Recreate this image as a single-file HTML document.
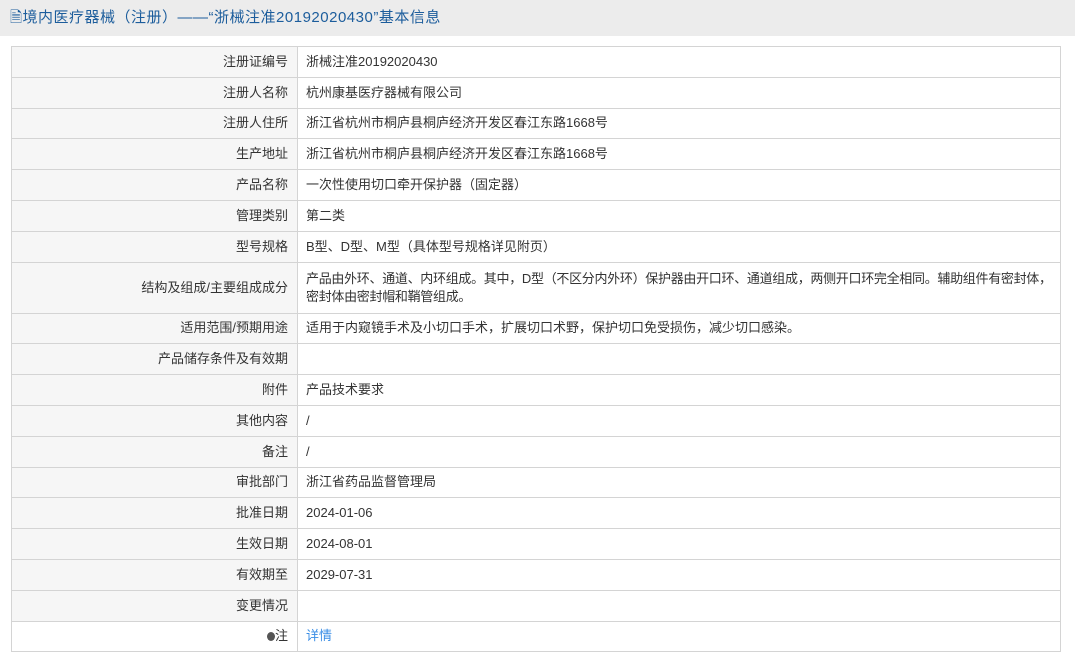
<!DOCTYPE html>
<html><head><meta charset="utf-8"><style>
body{margin:0;background:#fff;font-family:"Liberation Sans","Noto Sans CJK SC",sans-serif;font-size:13px;color:#333;width:1075px;height:663px;overflow:hidden}
.hd{height:36px;background:#ececec;color:#1c5d9c;font-size:15px;letter-spacing:0.5px;line-height:36px;padding-left:10px}
table{position:absolute;left:11px;top:46px;width:1050px;border-collapse:collapse;border:1px solid #ccc;table-layout:fixed}
td{border:1px solid #d4d4d4;height:29.8px;padding:0 8px;line-height:18px;overflow:hidden}
td.l{width:268px;text-align:right;background:#f6f6f6;padding-right:9px}
a{color:#3a8ee6;text-decoration:none}
</style></head><body>
<div class="hd">&#128462;境内医疗器械（注册）——“浙械注准20192020430”基本信息</div>
<table>
<tr><td class="l">注册证编号</td><td>浙械注准20192020430</td></tr>
<tr><td class="l">注册人名称</td><td>杭州康基医疗器械有限公司</td></tr>
<tr><td class="l">注册人住所</td><td>浙江省杭州市桐庐县桐庐经济开发区春江东路1668号</td></tr>
<tr><td class="l">生产地址</td><td>浙江省杭州市桐庐县桐庐经济开发区春江东路1668号</td></tr>
<tr><td class="l">产品名称</td><td>一次性使用切口牵开保护器（固定器）</td></tr>
<tr><td class="l">管理类别</td><td>第二类</td></tr>
<tr><td class="l">型号规格</td><td>B型、D型、M型（具体型号规格详见附页）</td></tr>
<tr><td class="l" style="height:50px">结构及组成/主要组成成分</td><td style="letter-spacing:-0.3px;padding-right:2px"><span style="white-space:nowrap">产品由外环、通道、内环组成。其中，D型（不区分内外环）保护器由开口环、通道组成，两侧开口环完全相同。辅助组件有密封体，</span><br>密封体由密封帽和鞘管组成。</td></tr>
<tr><td class="l">适用范围/预期用途</td><td>适用于内窥镜手术及小切口手术，扩展切口术野，保护切口免受损伤，减少切口感染。</td></tr>
<tr><td class="l">产品储存条件及有效期</td><td></td></tr>
<tr><td class="l">附件</td><td>产品技术要求</td></tr>
<tr><td class="l">其他内容</td><td>/</td></tr>
<tr><td class="l">备注</td><td>/</td></tr>
<tr><td class="l">审批部门</td><td>浙江省药品监督管理局</td></tr>
<tr><td class="l">批准日期</td><td>2024-01-06</td></tr>
<tr><td class="l">生效日期</td><td>2024-08-01</td></tr>
<tr><td class="l">有效期至</td><td>2029-07-31</td></tr>
<tr><td class="l">变更情况</td><td></td></tr>
<tr><td class="l" style="background:#fff"><span style="display:inline-block;width:8px;height:9px;border-radius:50%;background:#555;vertical-align:-1px"></span>注</td><td><a>详情</a></td></tr>
</table>
</body></html>
